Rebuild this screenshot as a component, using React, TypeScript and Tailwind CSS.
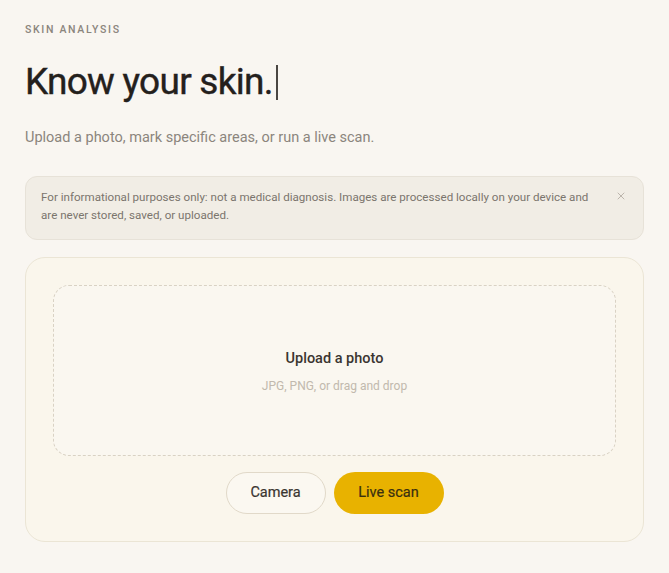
import { X } from 'lucide-react';

export default function App() {
  return (
    <div
      className="min-h-screen bg-[#f9f6f1] px-[25px] pt-[23px] pb-8 text-[#2a2622]"
      style={{ fontFamily: 'Roboto, "Noto Sans", sans-serif' }}
    >
      {/* Eyebrow */}
      <p className="text-[10.5px] font-medium tracking-[0.16em] text-[#8b857d] leading-[14px]">
        SKIN ANALYSIS
      </p>

      {/* Heading with caret */}
      <h1 className="mt-[21px] flex items-center text-[37px] font-normal tracking-[-0.02em] leading-[48px] text-[#24201c] [-webkit-text-stroke:0.4px_#24201c]">
        Know your skin.
        <span className="ml-[3px] inline-block w-[2px] h-[35px] bg-[#4a4642]" />
      </h1>

      <p className="mt-[21px] text-[14.5px] leading-[22px] text-[#8b857d]">
        Upload a photo, mark specific areas, or run a live scan.
      </p>

      {/* Notice */}
      <div className="mt-[27px] flex items-start gap-4 rounded-[12px] border border-[#e7e2d8] bg-[#f1ede5] pl-[15px] pr-[16px] pt-[11px] pb-[15px]">
        <p className="flex-1 text-[11.6px] leading-[18px] text-[#7b756d]">
          For informational purposes only: not a medical diagnosis. Images are processed locally on your device and are never stored, saved, or uploaded.
        </p>
        <button className="mt-[2px] text-[#b3ada4]">
          <X size={12} strokeWidth={1.75} />
        </button>
      </div>

      {/* Upload card */}
      <div className="mt-[17px] rounded-[20px] border border-[#ebe5d5] bg-[#faf6ec] p-[27px]">
        <div className="flex h-[171px] flex-col items-center justify-center rounded-[16px] border border-dashed border-[#d9d2c4] bg-[#faf7f0] pt-[2px]">
          <p className="text-[14.5px] font-medium leading-[20px] text-[#3a3530]">Upload a photo</p>
          <p className="mt-[9px] text-[12px] leading-[16px] text-[#c1b9ad]">JPG, PNG, or drag and drop</p>
        </div>

        <div className="mt-[16px] flex justify-center gap-2">
          <button className="h-[42px] w-[100px] rounded-full border border-[#e1d9c9] bg-[#fbf8f1] text-[14.5px] text-[#3a3530] [-webkit-text-stroke:0.2px_#3a3530]">
            Camera
          </button>
          <button className="h-[42px] w-[110px] rounded-full bg-[#e8b200] text-[14.5px] text-[#3a2f10] [-webkit-text-stroke:0.2px_#3a2f10]">
            Live scan
          </button>
        </div>
      </div>
    </div>
  );
}
